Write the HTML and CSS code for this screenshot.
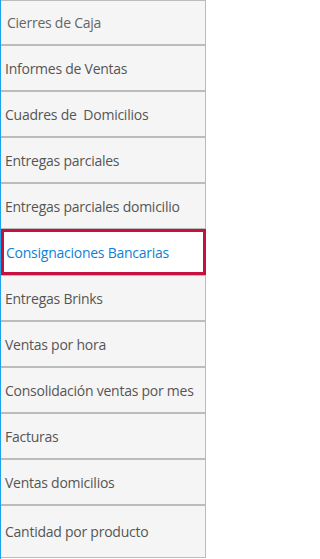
FILE: index.html
```html
<!DOCTYPE html>
<html lang="es">
<head>
<meta charset="utf-8">
<link rel="stylesheet" href="styles.css">
</head>
<body>
<nav class="menu">
  <a class="item item-first">Cierres de Caja</a>
  <a class="item">Informes de Ventas</a>
  <a class="item">Cuadres de &nbsp;Domicilios</a>
  <a class="item">Entregas parciales</a>
  <a class="item">Entregas parciales domicilio</a>
  <a class="item item-active">Consignaciones Bancarias</a>
  <a class="item">Entregas Brinks</a>
  <a class="item">Ventas por hora</a>
  <a class="item">Consolidación ventas por mes</a>
  <a class="item">Facturas</a>
  <a class="item">Ventas domicilios</a>
  <a class="item item-last">Cantidad por producto</a>
</nav>
</body>
</html>
```

FILE: styles.css
```css
html, body {
  margin: 0;
  padding: 0;
  background: #ffffff;
}

body {
  width: 207px;
  height: 559px;
  overflow: hidden;
  font-family: "Open Sans", "Noto Sans", sans-serif;
  font-size: 14px;
}

.menu {
  display: flex;
  flex-direction: column;
  width: 206px;
  height: 559px;
  box-sizing: border-box;
  border-left: 1px solid #1ca3ea;
}

.item {
  box-sizing: border-box;
  display: flex;
  align-items: center;
  height: 46px;
  width: 205px;
  padding-left: 4px;
  background: #f5f5f5;
  border-top: 1px solid #bcbcbc;
  border-bottom: 1px solid #bcbcbc;
  border-right: 1px solid #bcbcbc;
  color: #555555;
  white-space: nowrap;
  letter-spacing: -0.25px;
}

.item-first {
  height: 45px;
  padding-left: 6px;
  color: #666666;
}

.item-last {
  height: 53px;
}

.item-active {
  background: #ffffff;
  border: 3px solid #c8103e;
  padding-left: 2px;
  color: #0f7fd8;
}
```
